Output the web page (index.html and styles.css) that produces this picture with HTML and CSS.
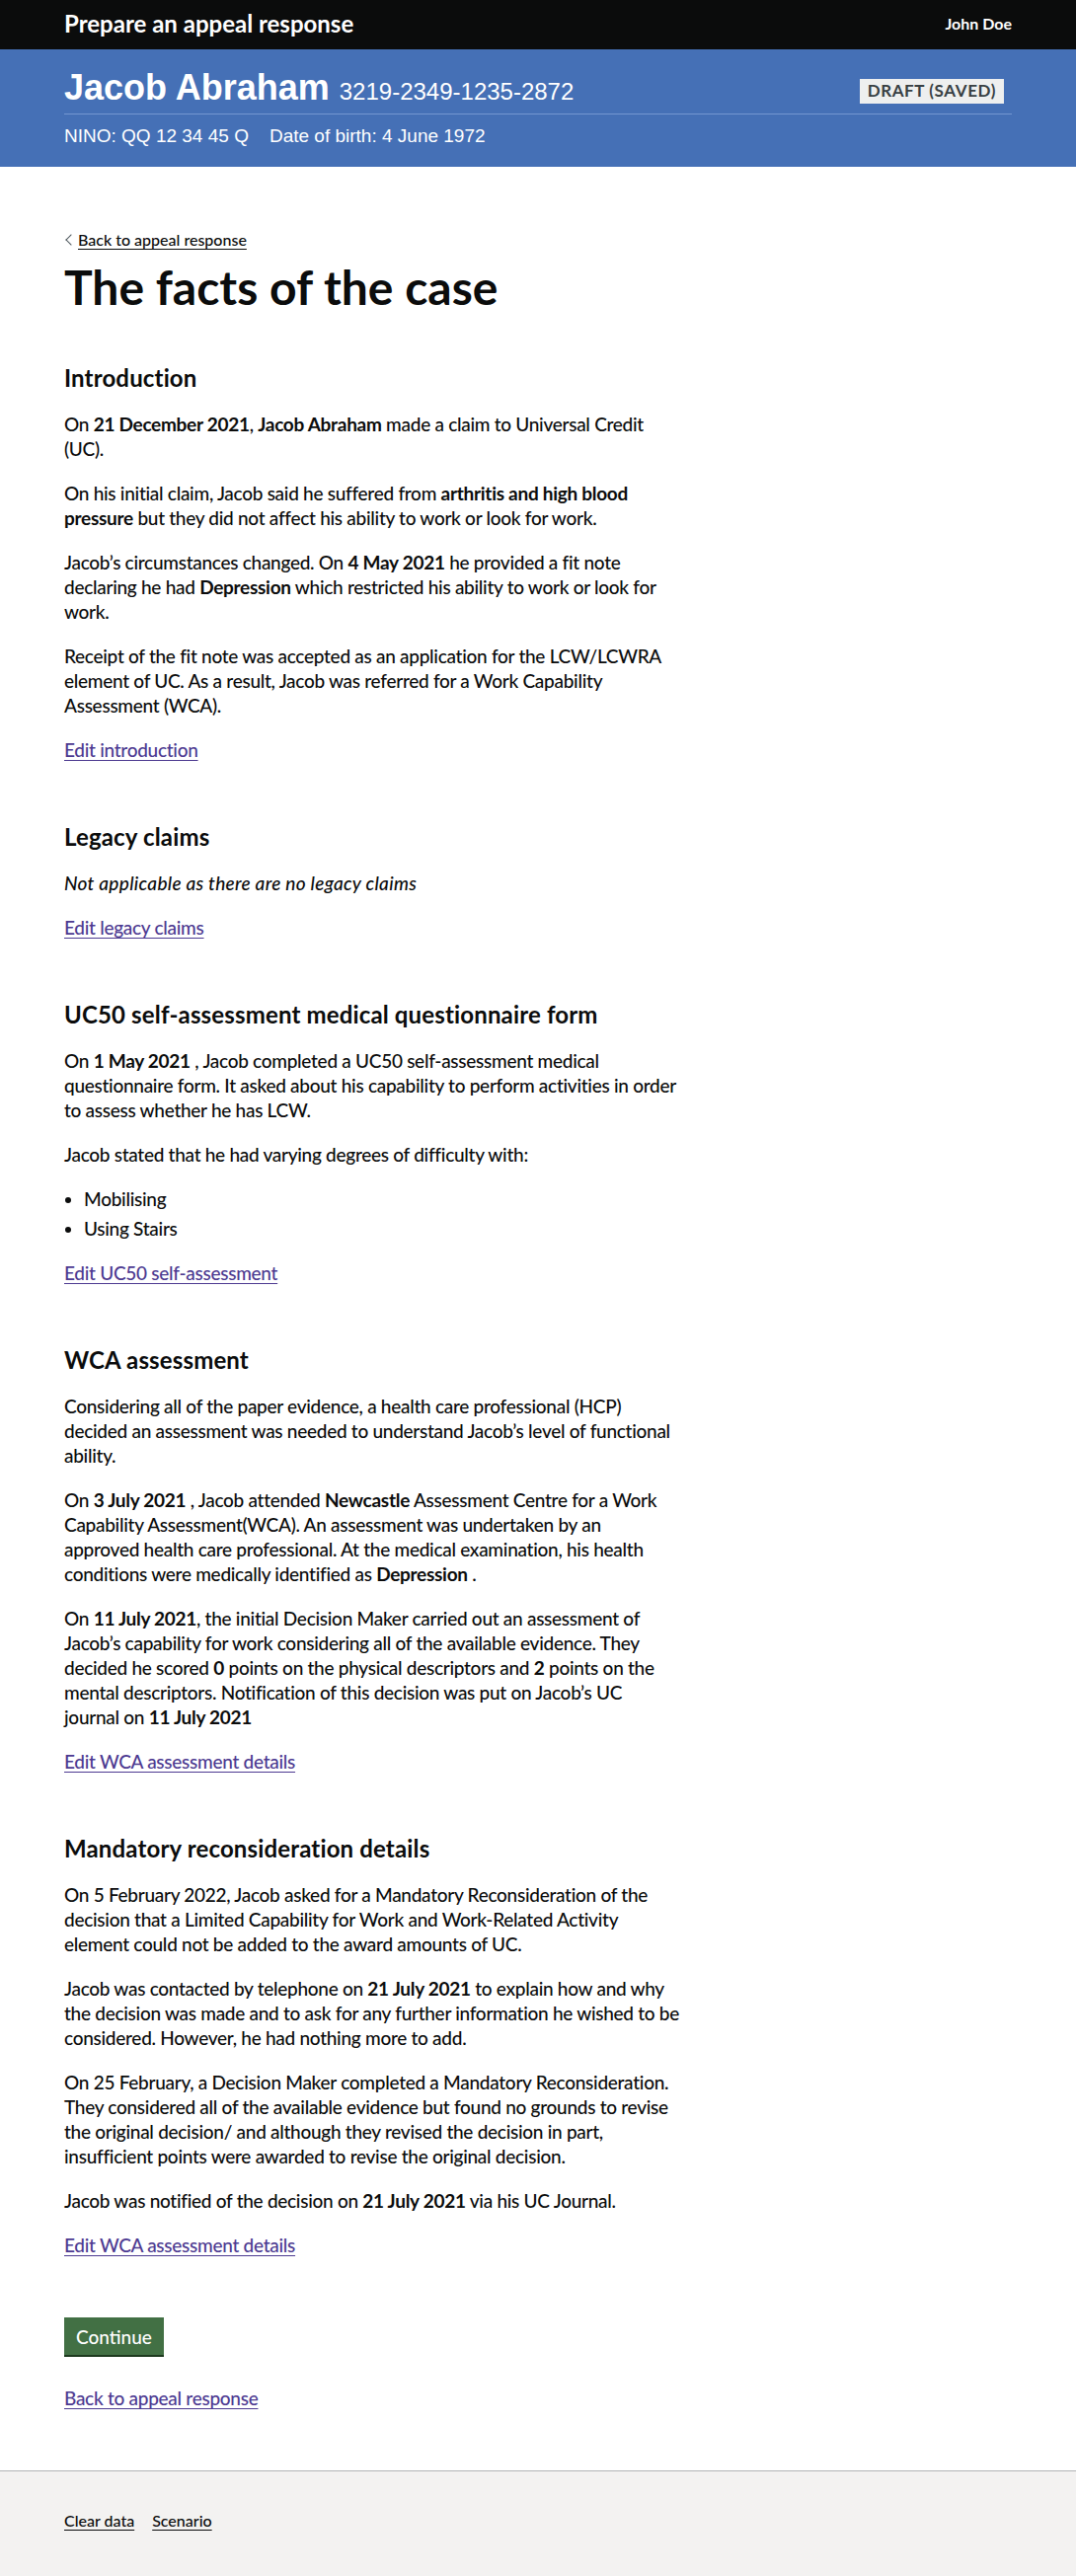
FILE: index.html
```html
<!DOCTYPE html>
<html lang="en">
<head>
<meta charset="utf-8">
<title>The facts of the case - Prepare an appeal response</title>
<link rel="stylesheet" href="styles.css">
</head>
<body class="page">
<header class="topbar">
  <div class="container topbar__inner">
    <span class="topbar__title">Prepare an appeal response</span>
    <span class="topbar__user">John Doe</span>
  </div>
</header>

<div class="banner">
  <div class="container">
    <div class="banner__row">
      <h2 class="banner__name">Jacob Abraham <span class="banner__ref">3219-2349-1235-2872</span></h2>
      <strong class="tag">Draft (saved)</strong>
    </div>
    <p class="banner__meta"><span>NINO: QQ 12 34 45 Q</span><span class="banner__dob">Date of birth: 4 June 1972</span></p>
  </div>
</div>

<div class="container">
  <main class="main">
    <div class="column">
      <div class="back"><a class="back-link" href="#">Back to appeal response</a></div>
      <h1 class="heading-xl">The facts of the case</h1>

      <section class="section">
        <h2 class="heading-m">Introduction</h2>
        <p class="body">On <strong>21 December 2021</strong>, <strong>Jacob Abraham</strong> made a claim to Universal Credit<br>(UC).</p>
        <p class="body">On his initial claim, Jacob said he suffered from <strong>arthritis and high blood<br>pressure</strong> but they did not affect his ability to work or look for work.</p>
        <p class="body">Jacob’s circumstances changed. On <strong>4 May 2021</strong> he provided a fit note<br>declaring he had <strong>Depression</strong> which restricted his ability to work or look for<br>work.</p>
        <p class="body">Receipt of the fit note was accepted as an application for the LCW/LCWRA<br>element of UC. As a result, Jacob was referred for a Work Capability<br>Assessment (WCA).</p>
        <p class="body"><a class="link" href="#">Edit introduction</a></p>
      </section>

      <section class="section">
        <h2 class="heading-m">Legacy claims</h2>
        <p class="body body--italic">Not applicable as there are no legacy claims</p>
        <p class="body"><a class="link" href="#">Edit legacy claims</a></p>
      </section>

      <section class="section">
        <h2 class="heading-m">UC50 self-assessment medical questionnaire form</h2>
        <p class="body">On <strong>1 May 2021</strong> , Jacob completed a UC50 self-assessment medical<br>questionnaire form. It asked about his capability to perform activities in order<br>to assess whether he has LCW.</p>
        <p class="body">Jacob stated that he had varying degrees of difficulty with:</p>
        <ul class="list">
          <li>Mobilising</li>
          <li>Using Stairs</li>
        </ul>
        <p class="body"><a class="link" href="#">Edit UC50 self-assessment</a></p>
      </section>

      <section class="section">
        <h2 class="heading-m">WCA assessment</h2>
        <p class="body">Considering all of the paper evidence, a health care professional (HCP)<br>decided an assessment was needed to understand Jacob’s level of functional<br>ability.</p>
        <p class="body">On <strong>3 July 2021</strong> , Jacob attended <strong>Newcastle</strong> Assessment Centre for a Work<br>Capability Assessment(WCA). An assessment was undertaken by an<br>approved health care professional. At the medical examination, his health<br>conditions were medically identified as <strong>Depression</strong> .</p>
        <p class="body">On <strong>11 July 2021</strong>, the initial Decision Maker carried out an assessment of<br>Jacob’s capability for work considering all of the available evidence. They<br>decided he scored <strong>0</strong> points on the physical descriptors and <strong>2</strong> points on the<br>mental descriptors. Notification of this decision was put on Jacob’s UC<br>journal on <strong>11 July 2021</strong></p>
        <p class="body"><a class="link" href="#">Edit WCA assessment details</a></p>
      </section>

      <section class="section">
        <h2 class="heading-m">Mandatory reconsideration details</h2>
        <p class="body">On 5 February 2022, Jacob asked for a Mandatory Reconsideration of the<br>decision that a Limited Capability for Work and Work-Related Activity<br>element could not be added to the award amounts of UC.</p>
        <p class="body">Jacob was contacted by telephone on <strong>21 July 2021</strong> to explain how and why<br>the decision was made and to ask for any further information he wished to be<br>considered. However, he had nothing more to add.</p>
        <p class="body">On 25 February, a Decision Maker completed a Mandatory Reconsideration.<br>They considered all of the available evidence but found no grounds to revise<br>the original decision/ and although they revised the decision in part,<br>insufficient points were awarded to revise the original decision.</p>
        <p class="body">Jacob was notified of the decision on <strong>21 July 2021</strong> via his UC Journal.</p>
        <p class="body"><a class="link" href="#">Edit WCA assessment details</a></p>
      </section>

      <div class="actions"><button class="button" type="button">Continue</button></div>
      <p class="body"><a class="link" href="#">Back to appeal response</a></p>
    </div>
  </main>
</div>

<footer class="footer">
  <div class="container">
    <ul class="footer__links">
      <li><a class="footer__link" href="#">Clear data</a></li>
      <li><a class="footer__link" href="#">Scenario</a></li>
    </ul>
  </div>
</footer>
</body>
</html>
```
FILE: styles.css
```css
*, *::before, *::after { box-sizing: border-box; }

html { background: #ffffff; }

.page {
  margin: 0;
  min-height: 100vh;
  display: flex;
  flex-direction: column;
  font-family: Lato, "Liberation Sans", Arial, sans-serif;
  font-weight: 500;
  color: #0b0c0c;
  background: #ffffff;
}

.container {
  width: 100%;
  max-width: 960px;
  margin: 0 auto;
}

/* Top bar */
.topbar {
  background: #0b0c0c;
  color: #ffffff;
  height: 50px;
  padding-top: 9px;
}
.topbar__inner {
  display: flex;
  justify-content: space-between;
  align-items: flex-start;
}
.topbar__title {
  font-size: 24px;
  line-height: 30px;
  font-weight: 700;
}
.topbar__user {
  margin-top: 5px;
  font-size: 16px;
  line-height: 20px;
  font-weight: 700;
}

/* Case banner */
.banner {
  background: #4570b6;
  color: #ffffff;
  padding: 19px 0 19px;
  font-family: "Liberation Sans", Arial, sans-serif;
  font-weight: 400;
}
.banner__row {
  display: flex;
  justify-content: space-between;
  align-items: flex-start;
  padding-bottom: 6px;
  border-bottom: 1px solid #7497d0;
}
.banner__name {
  margin: 0;
  font-size: 36px;
  line-height: 40px;
  font-weight: 700;
}
.banner__ref {
  font-size: 24px;
  line-height: 1;
  font-weight: 400;
}
.tag {
  margin: 11px 8px 0 0;
  padding: 2px 8px 3px;
  background: #eeefef;
  color: #383f43;
  font-family: Lato, "Liberation Sans", Arial, sans-serif;
  font-size: 17px;
  line-height: 20px;
  font-weight: 700;
  letter-spacing: 0.6px;
  text-transform: uppercase;
}
.banner__meta {
  margin: 9px 0 0;
  font-size: 19px;
  line-height: 25px;
}
.banner__dob { margin-left: 21px; }

/* Main */
.main {
  padding: 64px 0 41px;
}
.column {
  max-width: 660px;
}

.back {
  display: flex;
  margin-bottom: 13px;
}
.back-link {
  display: inline-flex;
  align-items: center;
  font-size: 16px;
  line-height: 20px;
  color: #0b0c0c;
  text-decoration: underline;
  text-decoration-thickness: 1px;
  text-underline-offset: 0.16em;
}
.back-link::before {
  content: "";
  display: block;
  width: 8px;
  height: 8px;
  margin: 0 3px 0 3px;
  border-left: 1px solid #505a5f;
  border-bottom: 1px solid #505a5f;
  transform: rotate(45deg);
}

.heading-xl {
  margin: 0 0 52px;
  font-size: 48px;
  line-height: 50px;
  font-weight: 700;
}

.section {
  margin-bottom: 61px;
}
.heading-m {
  margin: 0 0 19px;
  font-size: 24px;
  line-height: 30px;
  font-weight: 700;
  letter-spacing: 0.15px;
}

.body {
  margin: 0 0 20px;
  font-size: 19px;
  line-height: 25px;
  letter-spacing: -0.28px;
}
.body strong { font-weight: 700; }
.body--italic {
  font-style: italic;
  letter-spacing: 0.3px;
}

.list {
  margin: 0 0 20px;
  padding-left: 20px;
  font-size: 19px;
  line-height: 25px;
  letter-spacing: -0.28px;
  list-style: disc;
}
.list li { margin-bottom: 5px; }

.link {
  color: #4d3a91;
  text-decoration: underline;
  text-decoration-thickness: 1px;
  text-underline-offset: 0.16em;
}

.actions {
  display: flex;
  margin-bottom: 31px;
}
.button {
  font-family: Lato, "Liberation Sans", Arial, sans-serif;
  font-size: 19px;
  line-height: 19px;
  font-weight: 500;
  color: #ffffff;
  background: #427044;
  border: 2px solid transparent;
  border-radius: 0;
  padding: 8px 10px 7px;
  box-shadow: 0 2px 0 #1e3a1f;
  cursor: pointer;
}

/* Footer */
.footer {
  flex: 1 0 auto;
  background: #f3f2f1;
  border-top: 1px solid #b1b4b6;
  padding: 40px 0 40px;
}
.footer__links {
  display: flex;
  gap: 18px;
  margin: 0;
  padding: 0;
  list-style: none;
  font-size: 16px;
  line-height: 20px;
}
.footer__link {
  color: #0b0c0c;
  text-decoration: underline;
  text-decoration-thickness: 1px;
  text-underline-offset: 0.16em;
}
```
